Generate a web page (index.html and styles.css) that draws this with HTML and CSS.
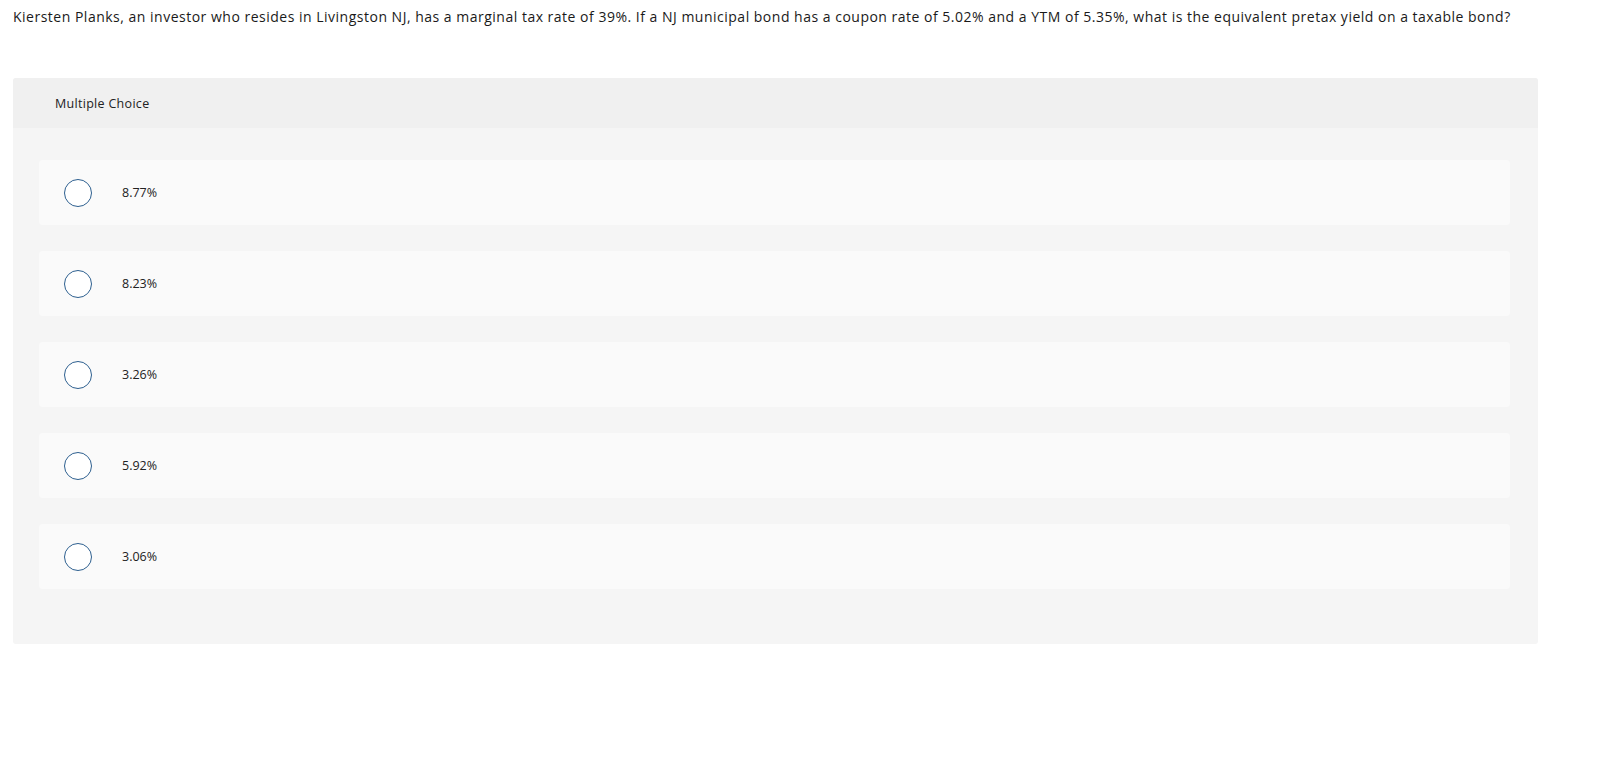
FILE: index.html
```html
<!DOCTYPE html>
<html>
<head>
<meta charset="utf-8">
<link rel="stylesheet" href="styles.css">
</head>
<body>
<p class="question">Kiersten Planks, an investor who resides in Livingston NJ, has a marginal tax rate of 39%. If a NJ municipal bond has a coupon rate of 5.02% and a YTM of 5.35%, what is the equivalent pretax yield on a taxable bond?</p>
<div class="mc">
  <div class="mc-header">Multiple Choice</div>
  <div class="mc-body">
    <div class="option"><span class="radio"></span><span class="label">8.77%</span></div>
    <div class="option"><span class="radio"></span><span class="label">8.23%</span></div>
    <div class="option"><span class="radio"></span><span class="label">3.26%</span></div>
    <div class="option"><span class="radio"></span><span class="label">5.92%</span></div>
    <div class="option"><span class="radio"></span><span class="label">3.06%</span></div>
  </div>
</div>
</body>
</html>
```
FILE: styles.css
```css
body {
  margin: 0;
  background: #ffffff;
  font-family: "Open Sans", "Liberation Sans", sans-serif;
  color: #1a1a1a;
}
.question {
  margin: 0;
  padding: 7px 0 0 13px;
  font-size: 14px;
  letter-spacing: 0.5px;
  line-height: 20px;
  white-space: nowrap;
}
.mc {
  margin: 51px 0 0 13px;
  width: 1525px;
  background: #f5f5f5;
  border-radius: 3px;
  overflow: hidden;
}
.mc-header {
  height: 50px;
  background: #f0f0f0;
  display: flex;
  align-items: center;
  padding-left: 42px;
  font-size: 12.5px;
  letter-spacing: 0.3px;
  color: #222;
}
.mc-body {
  padding: 32px 28px 55px 26px;
  display: flex;
  flex-direction: column;
  gap: 26px;
}
.option {
  height: 65px;
  background: #fafafa;
  border-radius: 4px;
  display: flex;
  align-items: center;
}
.radio {
  box-sizing: border-box;
  width: 28px;
  height: 28px;
  margin-left: 25px;
  border: 1.5px solid #2d5f8f;
  border-radius: 50%;
  background: #fff;
  flex: none;
}
.label {
  margin-left: 30px;
  font-size: 12.5px;
  color: #222;
}
```
